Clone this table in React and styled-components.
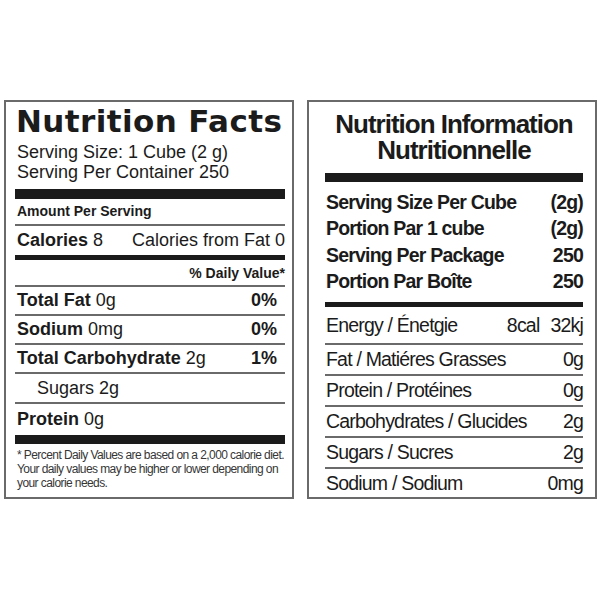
import React from "react";
import styled, { createGlobalStyle } from "styled-components";

const SANS = `"Liberation Sans", Arial, sans-serif`;
const INK = "#1b1b1b";
const RULE = "#6a6a6a";

const GlobalStyle = createGlobalStyle`
  html, body {
    margin: 0;
    padding: 0;
    background: #ffffff;
  }
  body {
    font-family: ${SANS};
    color: ${INK};
  }
`;

const Page = styled.div`
  display: flex;
  flex-direction: row;
  gap: 13px;
  padding: 100px 0 0 4px;
  width: 600px;
  height: 600px;
  box-sizing: border-box;
`;

const Panel = styled.div`
  display: flex;
  flex-direction: column;
  width: 290px;
  height: 399px;
  box-sizing: border-box;
  border: 2px solid ${RULE};
  padding: ${(p) => p.$pad};
  overflow: hidden;
`;

/* ---------- left: Nutrition Facts ---------- */

const FactsTitle = styled.div`
  font-family: "DejaVu Sans", sans-serif;
  font-weight: bold;
  font-size: 31px;
  line-height: 30px;
  letter-spacing: 0.4px;
  margin-left: 1px;
  white-space: nowrap;
`;

const ServingBlock = styled.div`
  display: flex;
  flex-direction: column;
  margin-top: ${(p) => p.$top}px;
`;

const ServingLine = styled.div`
  font-size: 18px;
  line-height: 20px;
  margin-left: 2px;
  white-space: nowrap;
`;

const Bar = styled.div`
  height: ${(p) => p.$h}px;
  margin-top: ${(p) => p.$top || 0}px;
  background: ${INK};
  flex-shrink: 0;
`;

const AmountRow = styled.div`
  font-size: 14px;
  font-weight: bold;
  line-height: 16px;
  padding: 4px 0 5px 2px;
  border-bottom: 2px solid ${RULE};
`;

const FactRow = styled.div`
  display: flex;
  align-items: center;
  justify-content: space-between;
  height: ${(p) => p.$h || 27}px;
  flex-shrink: 0;
  padding-left: ${(p) => (p.$indent ? 22 : 2)}px;
  font-size: 18px;
  border-bottom: ${(p) => (p.$last ? "none" : `2px solid ${RULE}`)};
`;

const Label = styled.span`
  font-weight: bold;
`;

const Amount = styled.span`
  font-weight: normal;
`;

const Percent = styled.span`
  font-weight: bold;
  padding-right: 8px;
`;

const DailyHead = styled.div`
  display: flex;
  justify-content: flex-end;
  align-items: center;
  height: 25px;
  font-size: 14px;
  font-weight: bold;
  border-bottom: 2px solid ${RULE};
`;

const Footnote = styled.div`
  font-size: 12px;
  line-height: 14px;
  letter-spacing: -0.58px;
  padding: 4px 0 0 2px;
  color: #363636;
  white-space: nowrap;
`;

/* ---------- right: Nutrition Information ---------- */

const InfoTitle = styled.div`
  font-weight: bold;
  font-size: 26px;
  line-height: 26px;
  letter-spacing: -1px;
  text-align: center;
  white-space: nowrap;
`;

const InfoRow = styled.div`
  display: flex;
  align-items: center;
  justify-content: space-between;
  font-size: 19.5px;
  letter-spacing: -0.8px;
  font-weight: ${(p) => (p.$bold ? "bold" : "normal")};
  height: ${(p) => p.$h}px;
  line-height: ${(p) => p.$h}px;
  flex-shrink: 0;
  padding-left: 1px;
  border-bottom: ${(p) => (p.$rule ? `2px solid ${RULE}` : "none")};
  white-space: nowrap;
`;

const Energy = styled.span`
  display: flex;
  gap: 11px;
`;

const factRows = [
  { label: "Total Fat", amount: "0g", pct: "0%" },
  { label: "Sodium", amount: "0mg", pct: "0%" },
  { label: "Total Carbohydrate", amount: "2g", pct: "1%" },
];

const servingRows = [
  ["Serving Size Per Cube", "(2g)"],
  ["Portion Par 1 cube", "(2g)"],
  ["Serving Per Package", "250"],
  ["Portion Par Boîte", "250"],
];

const infoRows = [
  ["Fat / Matiéres Grasses", "0g"],
  ["Protein / Protéines", "0g"],
  ["Carbohydrates / Glucides", "2g"],
  ["Sugars / Sucres", "2g"],
  ["Sodium / Sodium", "0mg"],
];

const FactsPanel = () => (
  <Panel $pad="4px 7px 0 9px">
    <FactsTitle>Nutrition Facts</FactsTitle>
    <ServingBlock $top={6}>
      <ServingLine>Serving Size: 1 Cube (2 g)</ServingLine>
      <ServingLine>Serving Per Container 250</ServingLine>
    </ServingBlock>
    <Bar $h={10} $top={7} />
    <AmountRow>Amount Per Serving</AmountRow>
    <FactRow $h={29} $last>
      <span>
        <Label>Calories</Label> <Amount>8</Amount>
      </span>
      <Amount>Calories from Fat 0</Amount>
    </FactRow>
    <Bar $h={5} />
    <DailyHead>% Daily Value*</DailyHead>
    {factRows.map((r) => (
      <FactRow key={r.label}>
        <span>
          <Label>{r.label}</Label> <Amount>{r.amount}</Amount>
        </span>
        <Percent>{r.pct}</Percent>
      </FactRow>
    ))}
    <FactRow $indent $h={28}>
      <Amount>Sugars 2g</Amount>
    </FactRow>
    <FactRow $h={31} $last>
      <span>
        <Label>Protein</Label> <Amount>0g</Amount>
      </span>
    </FactRow>
    <Bar $h={9} />
    <Footnote>
      * Percent Daily Values are based on a 2,000 calorie diet.
      <br />
      Your daily values may be higher or lower depending on
      <br />
      your calorie needs.
    </Footnote>
  </Panel>
);

const InfoPanel = () => (
  <Panel $pad="9px 12px 0 16px">
    <InfoTitle>Nutrition Information</InfoTitle>
    <InfoTitle>Nutritionnelle</InfoTitle>
    <Bar $h={9} $top={10} />
    <ServingBlock $top={6.5}>
      {servingRows.map(([l, v]) => (
        <InfoRow key={l} $bold $h={26.5}>
          <span>{l}</span>
          <span>{v}</span>
        </InfoRow>
      ))}
    </ServingBlock>
    <Bar $h={5} $top={7} />
    <InfoRow $h={36} $rule>
      <span>Energy / Énetgie</span>
      <Energy>
        <span>8cal</span>
        <span>32kj</span>
      </Energy>
    </InfoRow>
    {infoRows.map(([l, v], i) => (
      <InfoRow key={l} $h={29} $rule={i < infoRows.length - 1}>
        <span>{l}</span>
        <span>{v}</span>
      </InfoRow>
    ))}
  </Panel>
);

export default function App() {
  return (
    <>
      <GlobalStyle />
      <Page>
        <FactsPanel />
        <InfoPanel />
      </Page>
    </>
  );
}
